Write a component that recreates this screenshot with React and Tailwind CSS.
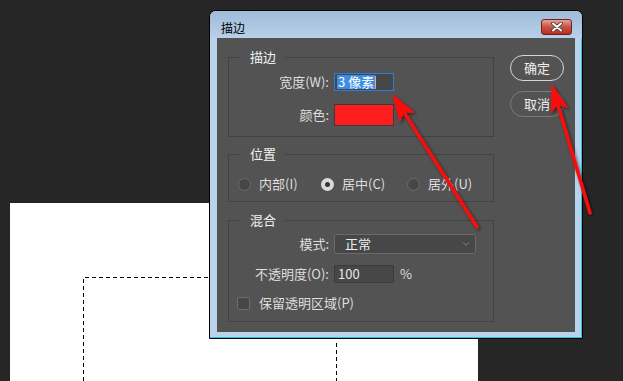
import { ChevronDown } from "lucide-react";

function Group({ title, className, children }) {
  return (
    <div className={`relative border border-[#424242] ${className}`}>
      <span className="absolute left-[12px] top-[-10px] px-[9px] bg-[#535353] text-[13px] leading-[18px] text-[#f2f2f2]">
        {title}
      </span>
      {children}
    </div>
  );
}

function Radio({ checked, label, className }) {
  return (
    <div className={`flex items-center ${className}`}>
      {checked ? (
        <span className="w-[13px] h-[13px] rounded-full bg-[#dadada] flex items-center justify-center">
          <span className="w-[5px] h-[5px] rounded-full bg-[#353535]" />
        </span>
      ) : (
        <span className="w-[13px] h-[13px] rounded-full border border-[#6c6c6c] bg-[#474747]" />
      )}
      <span className="ml-[8px] text-[13px] leading-[16px] text-[#dedede]">{label}</span>
    </div>
  );
}

export default function App() {
  return (
    <div className="relative w-[623px] h-[381px] overflow-hidden bg-[#262626] font-['Noto_Sans_CJK_SC','Noto_Sans',sans-serif]">
      {/* canvas with selection marquee */}
      <div className="absolute left-[10px] top-[203px] w-[468px] h-[178px] bg-white">
        <svg width="468" height="178" className="absolute inset-0">
          <path d="M73.5 178 V74.5 H200" stroke="#000" strokeDasharray="4 3" fill="none" />
          <path d="M326.5 140 V178" stroke="#000" strokeDasharray="4 3" fill="none" />
        </svg>
      </div>

      {/* dialog window */}
      <div className="absolute left-[209px] top-[10px] w-[374px] h-[329px] flex flex-col border border-black rounded-t-[7px] bg-[#bad2ea] shadow-[inset_-1px_-1px_0_#2cc3e6]">
        <div className="h-[27px] flex items-start justify-between rounded-t-[6px] bg-linear-to-b from-[#9fbbd8] to-[#b8d0e9]">
          <span className="ml-[11px] mt-[9px] text-[12px] leading-[16px] text-black">描边</span>
          <button className="mt-[8px] mr-[10px] w-[31px] h-[16px] rounded-[3px] border border-[#6b221a] bg-linear-to-b from-[#e3a196] via-[#c9503f] to-[#b9301f] flex items-center justify-center">
            <svg width="14" height="10" viewBox="0 0 14 10">
              <path d="M3 1.5 L11 8.5 M11 1.5 L3 8.5" stroke="#3a3a3a" strokeWidth="3.6" strokeLinecap="round" />
              <path d="M3 1.5 L11 8.5 M11 1.5 L3 8.5" stroke="#fff" strokeWidth="2" strokeLinecap="round" />
            </svg>
          </button>
        </div>

        <div className="flex-1 mx-[7px] mb-[6px] bg-[#535353] flex pl-[11px]">
          <div className="w-[266px] pt-[19px]">
            <Group title="描边" className="h-[80px] pt-[15px]">
              <div className="flex items-center h-[18px]">
                <span className="w-[100px] text-right text-[13px] text-[#dedede]">宽度(W):</span>
                <div className="ml-[5px] w-[60px] h-[18px] border border-[#2b7be0] bg-[#474747] flex items-center pl-[2px]">
                  <span className="bg-[#3a8ee8] text-white text-[13px] leading-[14px] px-[1px]">3 像素</span>
                  <span className="w-[1px] h-[13px] bg-[#e8b070]" />
                </div>
              </div>
              <div className="flex items-center h-[22px] mt-[13px]">
                <span className="w-[100px] text-right text-[13px] text-[#dedede]">颜色:</span>
                <div className="ml-[5px] w-[60px] h-[22px] border border-[#3a3a3a] bg-[#ff1d1d]" />
              </div>
            </Group>

            <Group title="位置" className="h-[48px] mt-[17px] pt-[21px] pl-[9px] flex items-start">
              <Radio label="内部(I)" className="w-[83px]" />
              <Radio checked label="居中(C)" className="w-[86px]" />
              <Radio label="居外(U)" />
            </Group>

            <Group title="混合" className="h-[102px] mt-[18px] pt-[13px]">
              <div className="flex items-center h-[20px]">
                <span className="w-[100px] text-right text-[13px] text-[#dedede]">模式:</span>
                <div className="ml-[5px] w-[142px] h-[20px] rounded-[3px] border border-[#6a6a6a] bg-[#474747] flex items-center justify-between pl-[10px] pr-[4px]">
                  <span className="text-[13px] leading-[16px] text-[#eeeeee]">正常</span>
                  <ChevronDown size={10} strokeWidth={1.5} className="text-[#b0b0b0]" />
                </div>
              </div>
              <div className="flex items-center h-[18px] mt-[11px]">
                <span className="w-[100px] text-right text-[13px] text-[#dedede]">不透明度(O):</span>
                <div className="ml-[5px] w-[60px] h-[18px] border border-[#3c3c3c] bg-[#474747] flex items-center pl-[3px]">
                  <span className="text-[13px] leading-[14px] text-[#e8e8e8]">100</span>
                </div>
                <span className="ml-[6px] text-[13px] text-[#dedede]">%</span>
              </div>
              <div className="flex items-center h-[14px] mt-[13px] pl-[8px]">
                <span className="w-[13px] h-[13px] rounded-[2px] border border-[#6c6c6c] bg-[#474747]" />
                <span className="ml-[9px] text-[13px] leading-[16px] text-[#dedede]">保留透明区域(P)</span>
              </div>
            </Group>
          </div>

          <div className="ml-[16px] pt-[17px] flex flex-col">
            <button className="w-[54px] h-[26px] rounded-full border border-[#d4d4d4] text-[13px] text-[#f0f0f0]">确定</button>
            <button className="mt-[10px] w-[54px] h-[26px] rounded-full border border-[#7a7a7a] text-[13px] text-[#f0f0f0]">取消</button>
          </div>
        </div>
      </div>

      {/* red annotation arrows */}
      <svg width="623" height="381" className="absolute inset-0 pointer-events-none">
        <defs>
          <filter id="sh" x="-20%" y="-20%" width="140%" height="140%">
            <feDropShadow dx="1.5" dy="1.5" stdDeviation="1.5" floodColor="#000" floodOpacity="0.55" />
          </filter>
        </defs>
        <g filter="url(#sh)" fill="#f80d0d" stroke="#f80d0d">
          <path d="M477 227 L403.7 111.9" strokeWidth="3.5" strokeLinecap="round" fill="none" />
          <path d="M393 95 L414.1 112.4 L403.7 111.9 L399.8 121.5 Z" strokeWidth="1" strokeLinejoin="round" />
          <path d="M590 213 L557.7 104.2" strokeWidth="3.5" strokeLinecap="round" fill="none" />
          <path d="M552 85 L567.6 107.5 L557.7 104.2 L551.3 112.3 Z" strokeWidth="1" strokeLinejoin="round" />
        </g>
      </svg>
    </div>
  );
}
